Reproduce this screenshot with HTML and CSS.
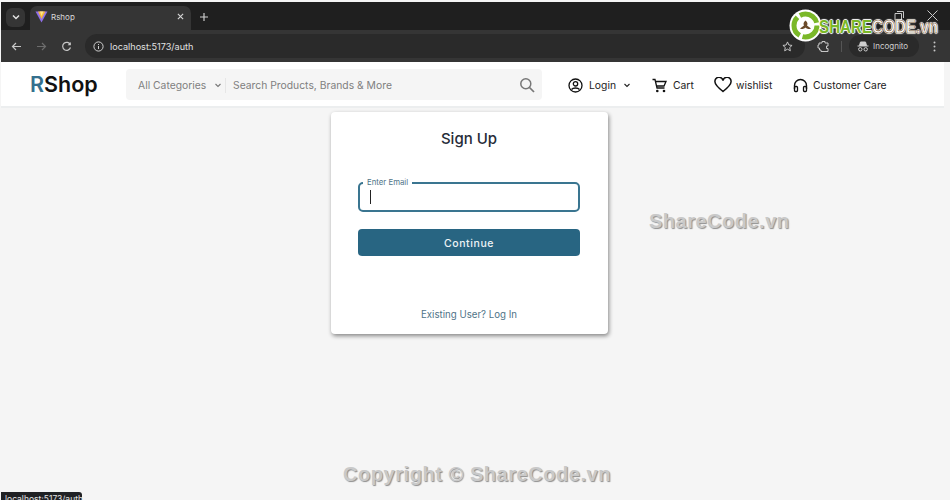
FILE: index.html
```html
<!DOCTYPE html>
<html lang="en">
<head>
<meta charset="utf-8">
<title>Rshop</title>
<link rel="stylesheet" href="styles.css">
</head>
<body>
<div class="browser">
  <div class="tabstrip">
    <div class="tab-menu"><svg width="10" height="10" viewBox="0 0 10 10"><path d="M2 3.500 5 6.500 8 3.500" fill="none" stroke="#e3e3e3" stroke-width="1.500"/></svg></div>
    <div class="tab">
      <svg class="favicon" width="13" height="13" viewBox="0 0 13 13"><path d="M0.500 1.500 6.500 12.500 12.500 1.500Z" fill="#8f6fe8"/><path d="M3 1.500 10.500 1.500 6.500 9Z" fill="#f6b93b"/><path d="M5 1.500 8.500 1.500 6.500 6Z" fill="#fde68a"/></svg>
      <span class="tab-title">Rshop</span>
      <svg class="tab-close" width="7" height="7" viewBox="0 0 8 8"><path d="M1 1 7 7M7 1 1 7" stroke="#d5d5d5" stroke-width="1.300"/></svg>
    </div>
    <svg class="new-tab" width="8" height="8" viewBox="0 0 9 9"><path d="M4.500 0v9M0 4.500h9" stroke="#d0d0d0" stroke-width="1.300"/></svg>
    <div class="win-controls">
      <svg width="11" height="11" viewBox="0 0 11 11"><path d="M3 1.500h6.500V8M1 3.500h6.500V10H1Z" fill="none" stroke="#c9c9c9"/></svg>
      <svg width="11" height="11" viewBox="0 0 11 11"><path d="M.5.500 10.500 10.500M10.500.500 .5 10.500" stroke="#c9c9c9"/></svg>
    </div>
  </div>
  <div class="toolbar">
    <svg class="tool" width="11" height="11" viewBox="0 0 11 11"><path d="M10 5.500H1.500M5 2 1.500 5.500 5 9" fill="none" stroke="#c7c7c7" stroke-width="1.200"/></svg>
    <svg class="tool" width="11" height="11" viewBox="0 0 11 11"><path d="M1 5.500H9.500M6 2 9.500 5.500 6 9" fill="none" stroke="#6d6d6d" stroke-width="1.200"/></svg>
    <svg class="tool" width="11" height="11" viewBox="0 0 11 11"><path d="M9.300 3.600A4 4 0 1 0 9.500 6.500" fill="none" stroke="#c7c7c7" stroke-width="1.200"/><path d="M9.800 1v3.200H6.600" fill="#c7c7c7"/></svg>
    <div class="omnibox">
      <span class="site-info"><svg width="11" height="11" viewBox="0 0 11 11"><circle cx="5.500" cy="5.500" r="4.600" fill="none" stroke="#d0d0d0"/><path d="M5.500 5v3M5.500 3v1" stroke="#d0d0d0"/></svg></span>
      <span class="url">localhost:5173/auth</span>
      <svg class="star" width="11" height="11" viewBox="0 0 12 12"><path d="M6 1 7.500 4.400 11 4.800 8.400 7.100 9.100 10.700 6 8.900 2.900 10.700 3.600 7.100 1 4.800 4.500 4.400Z" fill="none" stroke="#d0d0d0"/></svg>
    </div>
    <svg class="ext" width="13" height="13" viewBox="0 0 13 13"><path d="M2 3h3V1.500h3V3h3v3H9.500v2.500H11V11.500H4V10H2.500V8H1V5H2Z" fill="none" stroke="#c7c7c7"/></svg>
    <span class="tool-sep"></span>
    <div class="incognito">
      <svg width="12" height="11" viewBox="0 0 12 11"><path d="M3.500 1h5l1 3.500h-7ZM.5 5h11" fill="#d0d0d0" stroke="#d0d0d0"/><circle cx="3.300" cy="8.300" r="1.700" fill="none" stroke="#d0d0d0"/><circle cx="8.700" cy="8.300" r="1.700" fill="none" stroke="#d0d0d0"/></svg>
      <span>Incognito</span>
    </div>
    <svg class="dots" width="3" height="11" viewBox="0 0 3 11"><circle cx="1.500" cy="1.500" r="1" fill="#c7c7c7"/><circle cx="1.500" cy="5.500" r="1" fill="#c7c7c7"/><circle cx="1.500" cy="9.500" r="1" fill="#c7c7c7"/></svg>
  </div>
</div>

<header class="navbar">
  <div class="brand"><span class="brand-r">R</span>Shop</div>
  <div class="search">
    <span class="cat">All Categories</span>
    <svg class="cat-chev" width="8" height="8" viewBox="0 0 8 8"><path d="M1.500 3 4 5.500 6.500 3" fill="none" stroke="#777" stroke-width="1.100"/></svg>
    <span class="search-sep"></span>
    <span class="placeholder">Search Products, Brands &amp; More</span>
    <svg class="search-icon" width="16" height="16" viewBox="0 0 16 16"><circle cx="6.800" cy="6.800" r="5" fill="none" stroke="#777" stroke-width="1.500"/><path d="M10.500 10.500 15 15" stroke="#777" stroke-width="1.700"/></svg>
  </div>
  <nav class="nav-items">
    <div class="nav-item login">
      <svg width="15" height="15" viewBox="0 0 15 15"><circle cx="7.500" cy="7.500" r="6.500" fill="none" stroke="#111" stroke-width="1.300"/><circle cx="7.500" cy="5.800" r="2.200" fill="none" stroke="#111" stroke-width="1.300"/><path d="M3.500 11.500C5 9.500 10 9.500 11.500 11.500" fill="none" stroke="#111" stroke-width="1.300"/></svg>
      <span>Login</span>
      <svg class="login-chev" width="8" height="8" viewBox="0 0 8 8"><path d="M1.500 3 4 5.500 6.500 3" fill="none" stroke="#222" stroke-width="1.100"/></svg>
    </div>
    <div class="nav-item cart">
      <svg width="15" height="15" viewBox="0 0 15 15"><path d="M.5 1.500H3L5 10H12.500M3.500 3.500H14L12 8H4.500" fill="none" stroke="#111" stroke-width="1.300"/><circle cx="5.300" cy="13" r="1.300" fill="#111"/><circle cx="12" cy="13" r="1.300" fill="#111"/></svg>
      <span>Cart</span>
    </div>
    <div class="nav-item wish">
      <svg width="18" height="16" viewBox="0 0 18 16"><path d="M9 14.500C4 10.500 1 8 1 5A3.900 3.900 0 0 1 9 3.500 3.900 3.900 0 0 1 17 5C17 8 14 10.500 9 14.500Z" fill="none" stroke="#111" stroke-width="1.500"/></svg>
      <span>wishlist</span>
    </div>
    <div class="nav-item care">
      <svg width="15" height="15" viewBox="0 0 15 15"><path d="M1.500 11V7.500A6 6 0 0 1 13.500 7.500V11" fill="none" stroke="#111" stroke-width="1.400"/><rect x="1.500" y="8.500" width="3" height="5" rx="1" fill="none" stroke="#111" stroke-width="1.300"/><rect x="10.500" y="8.500" width="3" height="5" rx="1" fill="none" stroke="#111" stroke-width="1.300"/></svg>
      <span>Customer Care</span>
    </div>
  </nav>
</header>

<main class="page">
  <section class="card">
    <h1 class="card-title">Sign Up</h1>
    <div class="field">
      <label class="field-label">Enter Email</label>
      <div class="field-box"><span class="caret"></span></div>
    </div>
    <button class="continue">Continue</button>
    <a class="login-link">Existing User? Log In</a>
  </section>
</main>

<div class="mark mark-mid">ShareCode.vn</div>
<div class="mark mark-foot">Copyright © ShareCode.vn</div>
<div class="status">localhost:5173/auth</div>

<div class="logo-mark">
  <svg width="33" height="33" viewBox="0 0 33 33"><circle cx="16.500" cy="16.500" r="16" fill="#fff"/><circle cx="16.500" cy="16.500" r="11.500" fill="none" stroke="#7ab828" stroke-width="5" stroke-dasharray="21 3"/><path d="M16.500 11.500c2 1.500 2.500 3.500 1.500 5l4 3c-2 1-4 .5-5.500-1-1.500 1.500-3.500 2-5.500 1l4-3c-1-1.500-.5-3.500 1.500-5Z" fill="#6b4a2a"/></svg>
  <span class="logo-text"><span class="logo-share">SHARE</span><span class="logo-code">CODE</span><span class="logo-vn">.vn</span></span>
</div>
</body>
</html>
```

FILE: styles.css
```css
* { box-sizing: border-box; }
html, body { margin: 0; height: 500px; overflow: hidden; }
body {
  position: relative;
  display: flex;
  flex-direction: column;
  font-family: Inter, "Liberation Sans", sans-serif;
  background: #f5f5f5;
  color: #222;
  padding: 2px 0 0 1px;
}
.browser { display: flex; flex-direction: column; height: 60px; flex: none; }
.tabstrip {
  height: 28px;
  background: #1f1f1f;
  display: flex;
  align-items: center;
  padding: 4px 0 0 5px;
}
.tab-menu {
  width: 19px; height: 19px; background: #353535; border-radius: 6px;
  display: flex; align-items: center; justify-content: center;
  margin-bottom: 2px;
}
.tab {
  width: 161px; height: 24px; margin: 0 0 0 5px;
  background: #353535; border-radius: 7px 7px 0 0;
  display: flex; align-items: center; padding: 0 0 3px 5px;
  align-self: flex-end;
}
.favicon { flex: none; }
.tab-title { font-size: 8px; color: #d9d9d9; margin-left: 3px; flex: 1; }
.tab-close { margin-right: 7px; }
.new-tab { margin-left: 9px; margin-bottom: 2px; }
.win-controls {
  margin-left: auto; margin-right: 12px; margin-bottom: 5px;
  display: flex; align-items: center; gap: 22px;
}
.toolbar {
  height: 32px;
  background: #353535;
  display: flex;
  align-items: center;
  padding-left: 10px;
}
.tool { margin-right: 14px; flex: none; }
.omnibox {
  width: 720px; height: 24px; margin-left: -1px;
  background: #2a2a2a; border-radius: 12px;
  display: flex; align-items: center; padding: 0 12px 0 5px;
}
.site-info {
  width: 16px; height: 16px; display: flex; justify-content: center; align-items: center;
}
.url { font-size: 9.100px; color: #e0e0e0; margin-left: 4px; flex: 1; }
.ext { margin-left: 12px; flex: none; }
.tool-sep { width: 1px; height: 11px; background: #555; margin: 0 7px 0 11px; flex: none; }
.incognito {
  width: 70px; height: 22px; background: #2a2a2a; border-radius: 11px;
  display: flex; align-items: center; gap: 4px; padding-left: 8px;
  font-size: 8px; color: #d0d0d0; flex: none;
}
.dots { margin-left: 14px; flex: none; }

.navbar {
  height: 46px; flex: none;
  background: #fff;
  border-bottom: 2px solid #eceeef;
  display: flex;
  align-items: center;
  margin-right: 6px;
  padding: 1px 0 0 29px;
}
.brand { font-size: 21.500px; font-weight: 600; color: #111; width: 96px; line-height: 1; }
.brand-r { color: #35708e; }
.search {
  width: 416px; height: 31px;
  background: #f5f5f5; border-radius: 4px;
  display: flex; align-items: center;
  padding: 1px 0 0 12px;
  font-size: 10.350px; color: #808080;
}
.cat { width: 76px; }
.cat-chev { flex: none; }
.search-sep { width: 1px; height: 15px; background: #e6e6e6; margin: 0 7px 0 3px; flex: none; }
.placeholder { flex: 1; }
.search-icon { margin-right: 7px; flex: none; }
.nav-items { display: flex; align-items: center; margin-left: 26px; font-size: 10.350px; color: #222; padding-top: 1px; }
.nav-item { display: flex; align-items: center; gap: 6px; }
.login { width: 84px; }
.login-chev { margin-left: 1px; }
.cart { width: 62px; }
.wish { width: 79px; gap: 4px; }
.care { gap: 5px; }

.page { flex: 1; position: relative; }
.card {
  width: 277px; height: 222px;
  margin: 4px 0 0 330px;
  background: #fff;
  border-radius: 4px;
  box-shadow: 1px 2px 4px rgba(0, 0, 0, .45);
  padding: 0 28px 0 27px;
  display: flex;
  flex-direction: column;
}
.card-title {
  margin: 18px 0 0; text-align: center;
  font-size: 15px; font-weight: 500; color: #262c38; line-height: 18px;
}
.field { position: relative; margin-top: 34px; }
.field-label {
  position: absolute; left: 5px; top: -5px;
  background: #fff; padding: 0 4px;
  font-size: 7.800px; line-height: 10px; color: #4f7488;
}
.field-box {
  height: 30px; border: 2px solid #3a7590; border-radius: 5px;
  display: flex; align-items: center; padding-left: 10px;
}
.caret { width: 1px; height: 14px; background: #222; }
.continue {
  height: 27px; margin-top: 17px; padding-top: 2px;
  background: #286582; color: #eef3f6;
  border: 0; border-radius: 4px;
  font: 500 10.500px Inter, "Liberation Sans", sans-serif;
  letter-spacing: .6px;
}
.login-link {
  margin-top: 52px; text-align: center;
  font-size: 9.700px; line-height: 14px; color: #4f7488;
}

.mark {
  position: absolute;
  font-family: "Liberation Sans", sans-serif;
  font-weight: 700;
  color: #c9c9c9;
  text-shadow: 1px 1px 1px #8f8f8f;
  white-space: nowrap;
}
.mark-mid { left: 649px; top: 210px; font-size: 20px; letter-spacing: .5px; }
.mark-foot { left: 343px; top: 463px; font-size: 20px; letter-spacing: .55px; }
.status {
  position: absolute; left: 1px; top: 492px; width: 81px; height: 14px;
  background: #202124; color: #e3e3e3; border-radius: 0 3px 0 0;
  font-size: 8.500px; line-height: 14px; padding-left: 4px;
}
.logo-mark {
  position: absolute; left: 789px; top: 9px;
  display: flex; align-items: center;
}
.logo-text {
  font-family: "Liberation Sans", sans-serif; font-size: 19px; font-weight: 700;
  margin-left: -3px; margin-top: 2px;
  white-space: nowrap;
  transform: scaleX(.8);
  transform-origin: left center;
  text-shadow: -1px 0 1px #fff, 1px 0 1px #fff, 0 -1px 1px #fff, 0 1px 1px #fff;
}
.logo-share { color: #7ab828; }
.logo-code, .logo-vn {
  color: #fff;
  -webkit-text-stroke: .7px #7a5a35;
}
```
